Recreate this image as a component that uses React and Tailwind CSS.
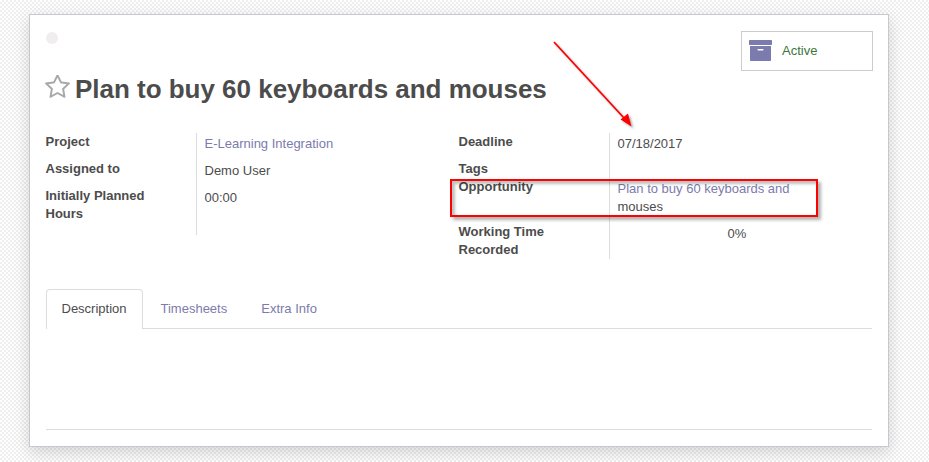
function Star() {
  return (
    <svg viewBox="64 108 1664 1512" className="mt-[1px] h-[23px] w-[25px] shrink-0" fill="#a8a8a8">
      <path d="M1201 1004l306-297-422-62-189-382-189 382-422 62 306 297-73 421 378-199 377 199zm527-357q0 22-26 48l-363 354 86 500q1 7 1 20 0 50-41 50-19 0-40-12l-449-236-449 236q-22 12-40 12-21 0-31.5-14.5t-10.5-35.5q0-6 2-20l86-500-364-354q-25-27-25-48 0-37 56-46l502-73 225-455q19-41 49-41t49 41l225 455 502 73q56 9 56 46z" />
    </svg>
  );
}

function Archive() {
  return (
    <svg viewBox="0 0 23 21" className="mb-[2px] h-[21px] w-[23px]" fill="#7c7bad">
      <rect x="0" y="0" width="23" height="5" rx="0.7" />
      <path fillRule="evenodd" d="M1 6h21v14.2a.8.8 0 0 1-.8.8H1.800a.8.8 0 0 1-.8-.8zM9.200 9a.8.8 0 0 0 0 1.600h4.600a.8.8 0 0 0 0-1.600z" />
    </svg>
  );
}

function Row({ label, height, children }) {
  return (
    <div className={`flex ${height}`}>
      <div className="w-[150px] shrink-0 pr-8 font-bold">{label}</div>
      <div className="flex-1 border-l border-[#ddd] pl-[8px] pt-[2px]">{children}</div>
    </div>
  );
}

export default function App() {
  return (
    <div className="relative h-[462px] w-[929px] overflow-hidden bg-white bg-[conic-gradient(#eeeeee_25%,#ffffff_0_50%,#eeeeee_0_75%,#ffffff_0)] bg-[length:4px_4px] pl-[29px] pt-[14px] font-['Liberation_Sans',Arial,sans-serif] text-[13px] leading-[18px] text-[#4c4c4c]">
      <main className="flex h-[433px] w-[860px] flex-col border border-[#c8c8d3] bg-white px-[15px] pt-4 shadow-[0_5px_15px_rgba(0,0,0,0.16)]">
        <div className="flex h-10 justify-between">
          <span className="ml-px mt-[1px] size-3 rounded-full bg-[#f0eeee]" />
          <button className="flex h-10 w-[132px] items-center border border-[#ccc] pl-[7px] text-left text-[#3c763d]">
            <Archive />
            <span className="ml-[10px]">Active</span>
          </button>
        </div>
        <div className="mt-[3px] flex">
          <Star />
          <h1 className="ml-[5px] -mt-px text-[26px] font-bold leading-8 tracking-[-0.02px]">Plan to buy 60 keyboards and mouses</h1>
        </div>
        <div className="ml-[0.5px] mt-[28px] flex">
          <section className="w-[413px]">
            <Row label="Project" height="h-[27px]"><a className="text-[#7c7bad]">E-Learning Integration</a></Row>
            <Row label="Assigned to" height="h-[27px]">Demo User</Row>
            <Row label="Initially Planned Hours" height="h-[48px]">00:00</Row>
          </section>
          <section className="w-[413px]">
            <Row label="Deadline" height="h-[27px]">07/18/2017</Row>
            <Row label="Tags" height="h-[18px]" />
            <Row label="Opportunity" height="h-[45px]">
              <a className="text-[#7c7bad]">Plan to buy 60 keyboards and</a><br />mouses
            </Row>
            <Row label="Working Time Recorded" height="h-[36px]">
              <span className="block pr-[15px] text-center">0%</span>
            </Row>
          </section>
        </div>
        <div className="ml-px mr-px mt-[30px] flex border-b border-[#ddd]">
          <div className="-mb-px h-10 w-[97px] rounded-t border border-b-0 border-[#ddd] bg-white pl-[14.500px] pt-[10px]">Description</div>
          <div className="ml-[17.500px] pt-[11px] text-[#7c7bad]">Timesheets</div>
          <div className="ml-[34px] pt-[11px] text-[#7c7bad]">Extra Info</div>
        </div>
        <div className="ml-px mr-px h-[101px] shrink-0 border-b border-[#ddd]" />
      </main>
      <div className="absolute left-[450px] top-[179px] h-[38px] w-[368px] border-2 border-[#f00] shadow-[3px_3px_3px_rgba(0,0,0,0.3),inset_3px_3px_3px_rgba(0,0,0,0.25)]" />
      <svg className="absolute left-[545px] top-[35px] h-[100px] w-[100px] drop-shadow-[2px_2px_1px_rgba(0,0,0,0.3)]" viewBox="545 35 100 100">
        <path d="M554 42L624 118" stroke="#f00" strokeWidth="1.800" />
        <path d="M631.500 126.500L620.500 119.500L628 113.500z" fill="#f00" />
      </svg>
    </div>
  );
}
